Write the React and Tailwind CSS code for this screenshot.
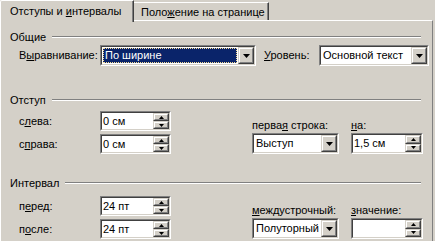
import React from "react";

const F = { fontFamily: '"Liberation Sans", Arial, sans-serif' };

function Sunken({ className, children }) {
  return (
    <div className={`shrink-0 border border-t-[#808080] border-l-[#808080] border-b-white border-r-white ${className}`}>
      <div className="h-full border border-t-[#404040] border-l-[#404040] border-b-[#d4d0c8] border-r-[#d4d0c8] bg-white flex">
        {children}
      </div>
    </div>
  );
}

function Raised({ className, children }) {
  return (
    <div className={`border border-t-[#d4d0c8] border-l-[#d4d0c8] border-b-[#404040] border-r-[#404040] bg-[#d4d0c8] ${className}`}>
      <div className="h-full border border-t-white border-l-white border-b-[#808080] border-r-[#808080] flex items-center justify-center">
        {children}
      </div>
    </div>
  );
}

function Down({ w = 7, h = 4 }) {
  return (
    <svg width={w} height={h} viewBox={`0 0 ${w} ${h}`}>
      <polygon points={`0,0 ${w},0 ${w / 2},${h}`} fill="#000" />
    </svg>
  );
}
function Up({ w = 5, h = 3 }) {
  return (
    <svg width={w} height={h} viewBox={`0 0 ${w} ${h}`}>
      <polygon points={`0,${h} ${w},${h} ${w / 2},0`} fill="#000" />
    </svg>
  );
}

function Combo({ className, value, selected }) {
  return (
    <Sunken className={className}>
      <div className="flex-1 flex items-center p-[1px] min-w-0">
        {selected ? (
          <div className="h-full flex-1 bg-[#0a246a] text-white border border-dotted border-[#f5db95] flex items-center pl-[1px]">
            {value}
          </div>
        ) : (
          <span className="pl-[1px] whitespace-nowrap">{value}</span>
        )}
      </div>
      <Raised className="w-[16px] h-full shrink-0">
        <Down />
      </Raised>
    </Sunken>
  );
}

function Spin({ className, value }) {
  return (
    <Sunken className={className}>
      <div className="flex-1 flex items-center pl-[1px] whitespace-nowrap">{value}</div>
      <div className="w-[16px] h-full flex flex-col shrink-0">
        <Raised className="flex-1">
          <Up />
        </Raised>
        <Raised className="flex-1">
          <Down w={5} h={3} />
        </Raised>
      </div>
    </Sunken>
  );
}

function Header({ label, className }) {
  return (
    <div className={`flex items-center h-[14px] ${className}`}>
      <span className="whitespace-nowrap">{label}</span>
      <div className="ml-[6px] flex-1 h-[2px] border-t border-b border-t-[#808080] border-b-white" />
    </div>
  );
}

function U({ children }) {
  return <span className="underline underline-offset-[1px]">{children}</span>;
}

function LeftRow({ label, value }) {
  return (
    <div className="flex items-center h-[20px]">
      <div className="w-[90px] pl-[9px] whitespace-nowrap">{label}</div>
      <Spin className="w-[71px] h-[20px]" value={value} />
    </div>
  );
}

export default function App() {
  return (
    <div className="w-[435px] h-[241px] bg-[#d4d0c8] overflow-hidden text-[11px] leading-[13px] text-black" style={F}>
      <div className="flex h-[20px] items-start">
        <div className="relative z-10 w-[134px] h-[22px] shrink-0 bg-[#d4d0c8] border-t border-l border-r border-t-white border-l-white border-r-[#404040] rounded-tl-[2px]">
          <div className="h-full border-r border-r-[#808080] pl-[9px] pt-[4px] whitespace-nowrap">
            Отступы и <U>и</U>нтервалы
          </div>
        </div>
        <div className="mt-[2px] w-[135px] h-[18px] shrink-0 border-t border-r border-t-white border-r-[#404040]">
          <div className="h-full border-r border-r-[#808080] pl-[7px] pt-[3px] whitespace-nowrap">
            Поло<U>ж</U>ение на странице
          </div>
        </div>
      </div>
      <div className="w-[433px] h-[221px] border-t border-l border-r border-t-white border-l-white border-r-[#808080] pl-[9px] pr-[11px]">
        <Header label="Общие" className="mt-[9px]" />
        <div className="flex items-center h-[21px] mt-[1px]">
          <div className="w-[90px] pl-[9px] shrink-0 whitespace-nowrap">
            В<U>ы</U>равнивание:
          </div>
          <Combo className="w-[156px] h-[21px]" value="По ширине" selected />
          <div className="ml-[8px] w-[55px] shrink-0 whitespace-nowrap">
            <U>У</U>ровень:
          </div>
          <Combo className="w-[110px] h-[21px]" value="Основной текст" />
        </div>

        <Header label="Отступ" className="mt-[27px]" />
        <div className="flex mt-[4px]">
          <div className="flex flex-col gap-[3px] shrink-0">
            <LeftRow label={<>с<U>л</U>ева:</>} value="0 см" />
            <LeftRow label={<>с<U>п</U>рава:</>} value="0 см" />
          </div>
          <div className="ml-[81px] flex flex-col justify-end shrink-0">
            <div className="mb-[1px] whitespace-nowrap">перва<U>я</U> строка:</div>
            <Combo className="w-[87px] h-[21px]" value="Выступ" />
          </div>
          <div className="ml-[12px] flex flex-col justify-end shrink-0">
            <div className="mb-[1px] whitespace-nowrap"><U>н</U>а:</div>
            <Spin className="w-[72px] h-[21px]" value="1,5 см" />
          </div>
        </div>

        <Header label="Интервал" className="mt-[22px]" />
        <div className="flex mt-[6px]">
          <div className="flex flex-col gap-[3px] shrink-0">
            <LeftRow label={<>п<U>е</U>ред:</>} value="24 пт" />
            <LeftRow label={<>п<U>о</U>сле:</>} value="24 пт" />
          </div>
          <div className="ml-[81px] flex flex-col justify-end shrink-0">
            <div className="mb-[1px] whitespace-nowrap"><U>м</U>еждустрочный:</div>
            <Combo className="w-[87px] h-[21px]" value="Полуторный" />
          </div>
          <div className="ml-[12px] flex flex-col justify-end shrink-0">
            <div className="mb-[1px] whitespace-nowrap"><U>з</U>начение:</div>
            <Spin className="w-[72px] h-[21px]" value="" />
          </div>
        </div>
      </div>
    </div>
  );
}
